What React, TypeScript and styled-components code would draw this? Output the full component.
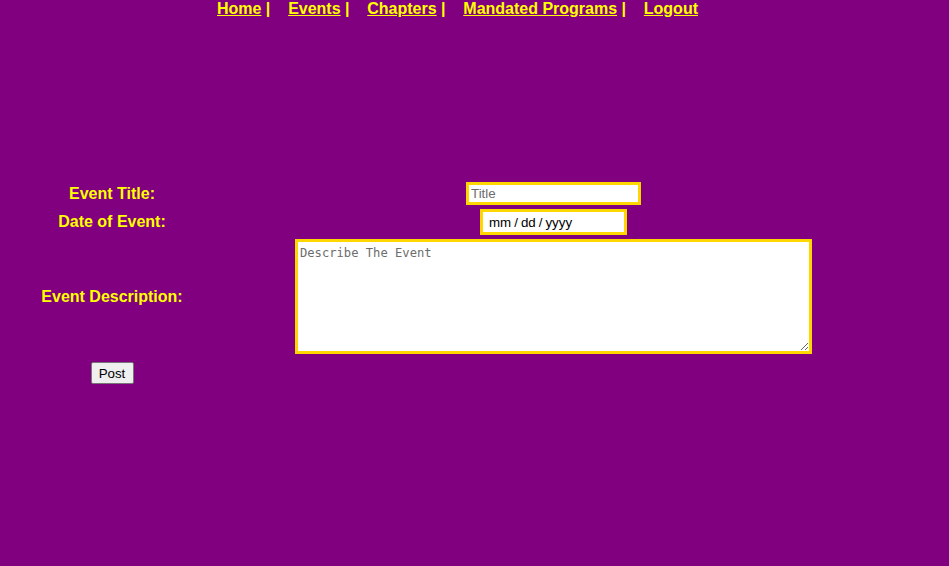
import React from 'react';
import styled, { createGlobalStyle } from 'styled-components';

const GlobalStyle = createGlobalStyle`
  html, body {
    margin: 0;
    padding: 0;
    background: #800080;
    font-family: "Liberation Sans", Arial, sans-serif;
  }
`;

const Page = styled.div`
  min-height: 566px;
  background: #800080;
`;

const Nav = styled.nav`
  display: flex;
  align-items: baseline;
  height: 18px;
  padding-left: 217px;
  font-size: 16px;
  font-weight: bold;
  line-height: 18px;
  color: #ffff00;
`;

const NavLink = styled.a`
  color: #ffff00;
  text-decoration: underline;
  cursor: pointer;
`;

const Separator = styled.span`
  margin-left: 4.4px;
  margin-right: 17.8px;
`;

const Form = styled.form`
  display: grid;
  grid-template-columns: 208px 675px;
  row-gap: 4px;
  align-items: center;
  margin: 164px 0 0 8px;
`;

const Label = styled.label`
  text-align: center;
  font-size: 16px;
  font-weight: bold;
  color: #ffff00;
`;

const Field = styled.div<{ $pad?: number }>`
  display: flex;
  justify-content: center;
  padding-top: ${(p) => p.$pad ?? 0}px;
`;

const TextInput = styled.input<{ $w: number; $h: number }>`
  box-sizing: border-box;
  width: ${(p) => p.$w}px;
  height: ${(p) => p.$h}px;
  border: 3px solid #ffd700;
  padding: 1px 2px;
  font-family: "Liberation Sans", Arial, sans-serif;
  font-size: 13.33px;
  color: #000;
  background: #fff;
  outline: none;

  &::placeholder {
    color: #6d6d6d;
  }

  &::-webkit-calendar-picker-indicator {
    display: none;
  }

  &::-webkit-datetime-edit {
    padding: 0 0 0 3px;
  }

  &::-webkit-datetime-edit-text {
    padding: 0 2px;
  }
`;

const DescriptionArea = styled.textarea`
  box-sizing: border-box;
  width: 517px;
  height: 115px;
  border: 3px solid #ffd700;
  padding: 4px 2px 2px 2px;
  font-family: "DejaVu Sans Mono", "Liberation Mono", monospace;
  font-size: 12.15px;
  background: #fff;
  outline: none;
  display: block;

  &::placeholder {
    color: #6d6d6d;
  }
`;

const PostButton = styled.button`
  box-sizing: border-box;
  width: 43px;
  height: 22px;
  padding: 1px 6px;
  font-family: "Liberation Sans", Arial, sans-serif;
  font-size: 13.33px;
  color: #000;
  background: #efefef;
  border: 1px solid #767676;
  border-radius: 2px;
`;

const links = ['Home', 'Events', 'Chapters', 'Mandated Programs', 'Logout'];

export default function App() {
  return (
    <Page>
      <GlobalStyle />
      <Nav>
        {links.map((l, i) => (
          <React.Fragment key={l}>
            <NavLink>{l}</NavLink>
            {i < links.length - 1 && <Separator>|</Separator>}
          </React.Fragment>
        ))}
      </Nav>
      <Form onSubmit={(e) => e.preventDefault()}>
        <Label>Event Title:</Label>
        <Field>
          <TextInput $w={175} $h={23} type="text" placeholder="Title" />
        </Field>
        <Label>Date of Event:</Label>
        <Field>
          <TextInput $w={147} $h={26} type="date" />
        </Field>
        <Label>Event Description:</Label>
        <Field>
          <DescriptionArea placeholder="Describe The Event" />
        </Field>
        <Field $pad={4}>
          <PostButton type="submit">Post</PostButton>
        </Field>
        <div />
      </Form>
    </Page>
  );
}
